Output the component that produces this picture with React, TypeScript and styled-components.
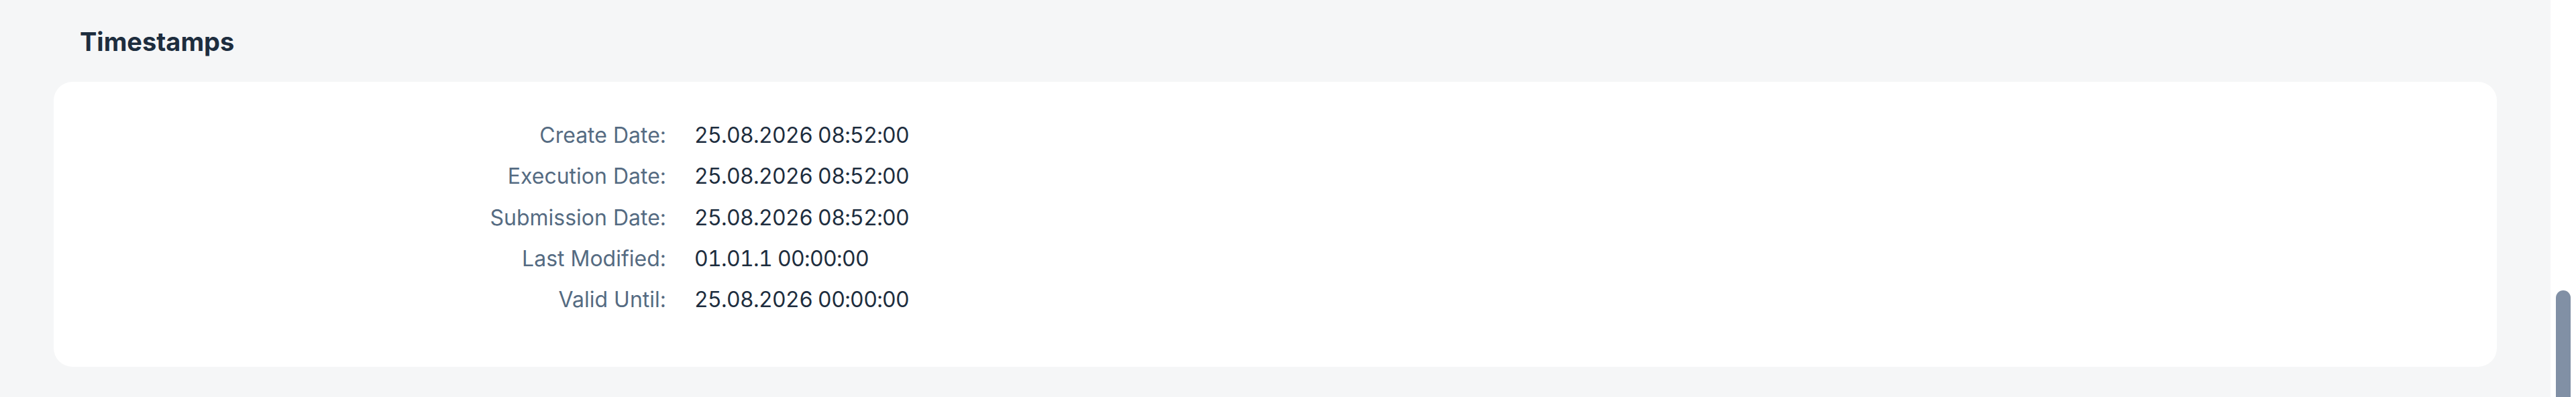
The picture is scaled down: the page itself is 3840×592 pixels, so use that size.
import React from 'react'
import styled, { createGlobalStyle } from 'styled-components'

const GlobalStyle = createGlobalStyle`
    html, body {
        margin: 0;
        padding: 0;
        background: #f5f6f7;
    }
    body {
        font-family: Inter, "Noto Sans", "Liberation Sans", sans-serif;
        color: #1d2d3e;
    }
`

const Screen = styled.div`
    display: flex;
    flex-direction: row;
    height: 592px;
    overflow: hidden;
`

const Main = styled.main`
    flex: 1;
    background: #f5f6f7;
    padding: 38px 80px 0 80px;
`

const SectionTitle = styled.h2`
    margin: 0 0 36px 0;
    padding-left: 39px;
    font-size: 38px;
    line-height: 48px;
    font-weight: 700;
    color: #1d2d3e;
`

const Card = styled.section`
    background: #ffffff;
    border-radius: 28px;
    padding: 49px 0 70px 0;
`

const Form = styled.dl`
    display: grid;
    grid-template-columns: 913px auto;
    column-gap: 42px;
    margin: 0;
`

const Label = styled.dt`
    text-align: right;
    font-size: 32px;
    line-height: 61.3px;
    color: #556b82;
`

const Value = styled.dd`
    margin: 0;
    font-size: 32px;
    line-height: 61.3px;
    color: #1d2d3e;
    font-variant-numeric: tabular-nums;
    letter-spacing: -0.7px;
`

const ScrollTrack = styled.div`
    width: 38px;
    background: #ffffff;
    padding: 433px 8px 0 8px;
    box-sizing: border-box;
`

const ScrollThumb = styled.div`
    width: 22px;
    height: 100%;
    background: #8190a5;
    border-radius: 11px 11px 0 0;
`

const rows = [
    { label: 'Create Date:', value: '25.08.2026 08:52:00' },
    { label: 'Execution Date:', value: '25.08.2026 08:52:00' },
    { label: 'Submission Date:', value: '25.08.2026 08:52:00' },
    { label: 'Last Modified:', value: '01.01.1 00:00:00' },
    { label: 'Valid Until:', value: '25.08.2026 00:00:00' },
]

export default function App() {
    return (
        <>
            <GlobalStyle />
            <Screen>
                <Main>
                    <SectionTitle>Timestamps</SectionTitle>
                    <Card>
                        <Form>
                            {rows.map(row => (
                                <React.Fragment key={row.label}>
                                    <Label>{row.label}</Label>
                                    <Value>{row.value}</Value>
                                </React.Fragment>
                            ))}
                        </Form>
                    </Card>
                </Main>
                <ScrollTrack>
                    <ScrollThumb />
                </ScrollTrack>
            </Screen>
        </>
    )
}
